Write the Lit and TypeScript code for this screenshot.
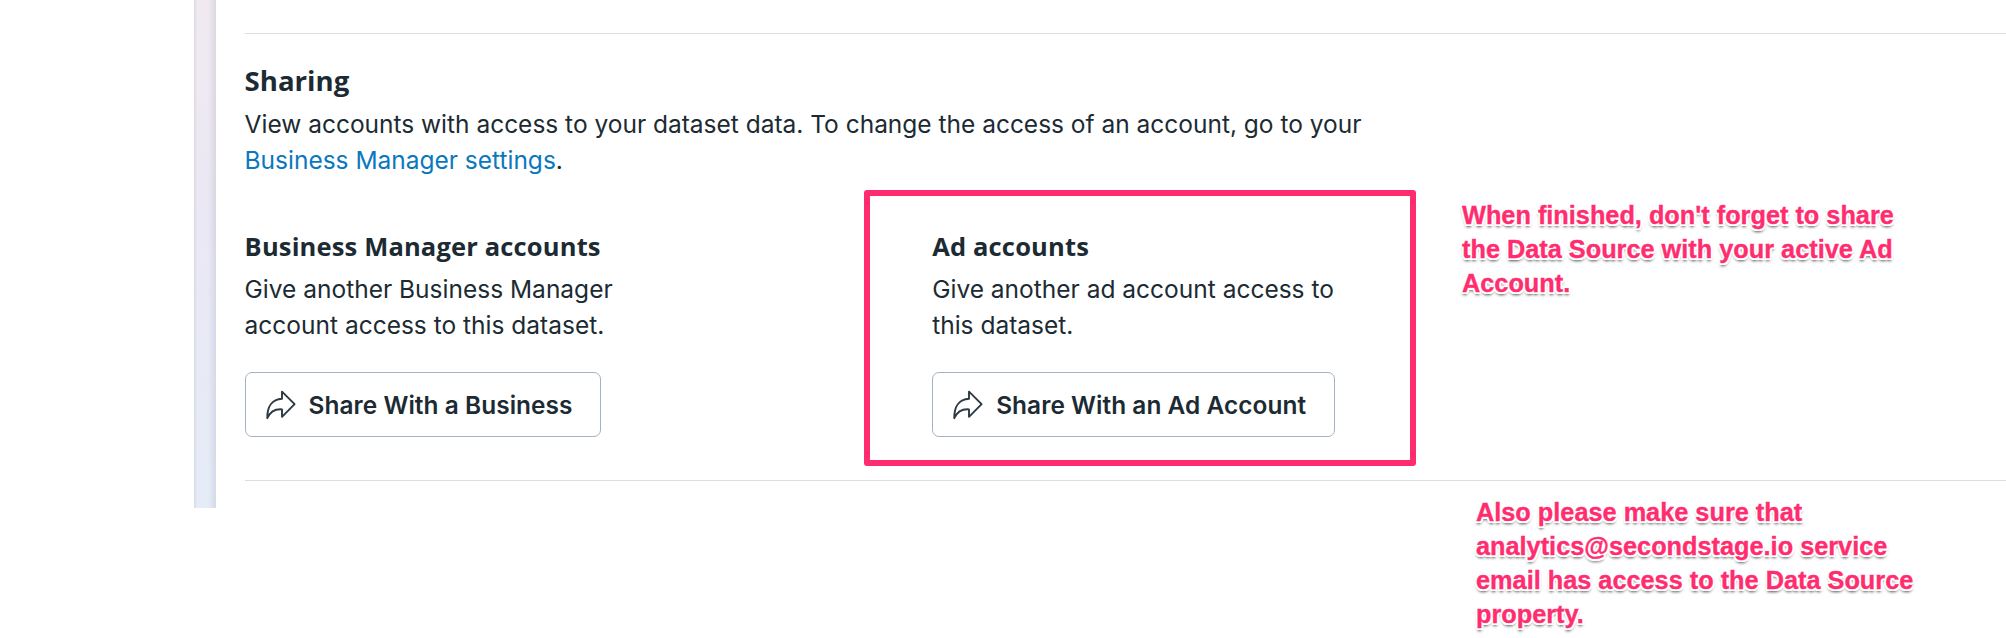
import { LitElement, html, css } from 'lit';
import { customElement, property } from 'lit/decorators.js';

@customElement('share-button')
class ShareButton extends LitElement {
  @property() label = '';

  static styles = css`
    :host { display: flex; }
    .btn {
      display: flex; align-items: center; gap: 13px; box-sizing: border-box;
      height: 65px; padding: 0 27.5px 0 20px; margin: 0;
      border: 1px solid #a3b2c2; border-radius: 7px; background: #fff; color: #1c2b33;
      font: 600 24.4px/36px Inter, sans-serif; letter-spacing: 0.06px; white-space: nowrap;
    }
    svg { width: 30px; height: 30px; flex: none; }
  `;

  render() {
    return html`<button class="btn">
      <svg viewBox="0 0 30 30" fill="none" stroke="#2c3a44" stroke-width="1.9" stroke-linejoin="round">
        <path d="M16 1.6 L28.6 14.2 L16 26.8 V19.4 C9 18.8 4.4 21.4 1.3 28.2 C1 16.5 6.2 9.4 16 8.8 Z" />
      </svg>
      <span>${this.label}</span>
    </button>`;
  }
}

@customElement('account-group')
class AccountGroup extends LitElement {
  @property() heading = '';
  @property({ attribute: false }) lines: string[] = [];
  @property() action = '';

  static styles = css`
    :host { display: flex; flex-direction: column; align-items: flex-start; }
    h3 { margin: 0; font: 700 25.5px/36px 'Open Sans', sans-serif; letter-spacing: 0.16px; }
    p { margin: 7px 0 29px; font: 400 24.5px/36px Inter, sans-serif; white-space: nowrap; }
  `;

  render() {
    return html`
      <h3>${this.heading}</h3>
      <p>${this.lines.map((l, i) => (i ? html`<br />${l}` : l))}</p>
      <share-button .label=${this.action}></share-button>
    `;
  }
}

@customElement('app-root')
class AppRoot extends LitElement {
  static styles = css`
    :host {
      display: block; position: relative; height: 638px; overflow: hidden;
      background: #fff; color: #1c2b33;
    }
    .page { display: flex; height: 508px; padding-left: 194px; }
    .gutter {
      width: 22px; flex: none;
      background:
        linear-gradient(90deg, rgba(60, 60, 100, 0.1), transparent 3px 14px, rgba(60, 60, 100, 0.1)),
        linear-gradient(#f0e9f0, #eae8f4 45%, #e5ecf7);
    }
    .panel { flex: 1; padding: 33px 0 0 28.6px; }
    .section {
      box-sizing: border-box; height: 448px; padding-top: 28px;
      border-top: 1px solid #dadde1; border-bottom: 1px solid #dadde1;
    }
    h2 { margin: 0; font: 700 27.6px/36px 'Open Sans', sans-serif; }
    .intro { margin: 8px 0 50px; font: 400 24.5px/36px Inter, sans-serif; letter-spacing: -0.01px; white-space: nowrap; }
    .link { color: #0a78be; text-decoration: none; }
    .groups { display: grid; grid-template-columns: 687.6px auto; justify-content: start; }
    .highlight {
      position: absolute; left: 864px; top: 190px; width: 552px; height: 276px;
      box-sizing: border-box; border: 6px solid #ff2d6f; border-radius: 3px;
    }
    .note {
      position: absolute; margin: 0; white-space: nowrap; color: #ff2d6f;
      font: 700 25.3px/34.2px 'Liberation Sans', Arial, sans-serif;
      -webkit-text-stroke: 0.35px #ff2d6f;
      text-shadow: 2px 0 0 #fff, -2px 0 0 #fff, 0 2px 0 #fff, 0 -2px 0 #fff,
        1.5px 1.5px 0 #fff, -1.5px 1.5px 0 #fff, 0 2.5px 3px rgba(0, 0, 0, 0.7);
    }
    .share { left: 1462px; top: 198px; }
    .email { left: 1476px; top: 494.6px; }
  `;

  render() {
    return html`
      <div class="page">
        <div class="gutter"></div>
        <main class="panel">
          <section class="section">
            <h2>Sharing</h2>
            <p class="intro">View accounts with access to your dataset data. To change the access of an account, go to your<br /><a class="link" href="#">Business Manager settings</a>.</p>
            <div class="groups">
              <account-group
                heading="Business Manager accounts"
                .lines=${['Give another Business Manager', 'account access to this dataset.']}
                action="Share With a Business"
              ></account-group>
              <account-group
                heading="Ad accounts"
                .lines=${['Give another ad account access to', 'this dataset.']}
                action="Share With an Ad Account"
              ></account-group>
            </div>
          </section>
        </main>
      </div>
      <div class="highlight"></div>
      <p class="note share">When finished, don't forget to share<br />the Data Source with your active Ad<br />Account.</p>
      <p class="note email">Also please make sure that<br />analytics@secondstage.io service<br />email has access to the Data Source<br />property.</p>
    `;
  }
}
